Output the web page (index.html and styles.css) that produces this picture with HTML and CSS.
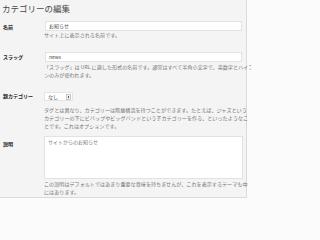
FILE: index.html
```html
<!DOCTYPE html>
<html lang="ja">
<head>
<meta charset="utf-8">
<title>カテゴリーの編集</title>
<link rel="stylesheet" href="styles.css">
</head>
<body>
<div class="wrap">
  <h1 class="title">カテゴリーの編集</h1>
  <div class="form">
    <div class="row row-name">
      <div class="label">名前</div>
      <div class="field">
        <div class="input">お知らせ</div>
        <p class="desc">サイト上に表示される名前です。</p>
      </div>
    </div>
    <div class="row row-slug">
      <div class="label">スラッグ</div>
      <div class="field">
        <div class="input">news</div>
        <p class="desc">「スラッグ」は URL に適した形式の名前です。通常はすべて半角小文字で、英数字とハイフ<br>ンのみが使われます。</p>
      </div>
    </div>
    <div class="row row-parent">
      <div class="label">親カテゴリー</div>
      <div class="field">
        <div class="select"><span class="select-text">なし</span><span class="select-arrow"></span></div>
        <p class="desc desc-parent">タグとは異なり、カテゴリーは階層構造を持つことができます。たとえば、ジャズという<br>カテゴリーの下にビバップやビッグバンドという子カテゴリーを作る、といったようなこ<br>とです。これはオプションです。</p>
      </div>
    </div>
    <div class="row row-desc">
      <div class="label label-desc">説明</div>
      <div class="field">
        <div class="textarea">サイトからのお知らせ</div>
        <p class="desc">この説明はデフォルトではあまり重要な意味を持ちませんが、これを表示するテーマも中<br>にはあります。</p>
      </div>
    </div>
  </div>
</div>
</body>
</html>
```

FILE: styles.css
```css
html, body {
  margin: 0;
  padding: 0;
}
body {
  width: 251px;
  height: 201px;
  overflow: hidden;
  background: #fbfbfb;
  font-family: "Noto Sans CJK JP", "Noto Sans", sans-serif;
  color: #333;
}
.wrap {
  width: 247px;
  height: 198px;
  box-sizing: border-box;
  background: #f4f4f4;
  border-right: 1px solid #dadada;
  border-bottom: 1px solid #dadada;
}
.title {
  margin: 0;
  padding: 2px 0 0 2px;
  font-size: 8.5px;
  line-height: 12px;
  font-weight: normal;
  color: #4a4a4a;
}
.row {
  display: flex;
}
.label {
  width: 41px;
  padding-left: 3px;
  flex: none;
  font-size: 5px;
  font-weight: bold;
  color: #222;
  line-height: 10px;
  white-space: nowrap;
}
.field {
  flex: 1;
  min-width: 0;
}
.row-name { margin-top: 7px; }
.row-name .label { padding-top: 1px; }
.row-slug { margin-top: 13px; }
.row-parent { margin-top: 13px; }
.row-parent .label { line-height: 7px; padding-top: 0; }
.row-desc { margin-top: 6px; }
.label-desc { padding-top: 4px; line-height: 8px; }
.input {
  margin-left: 1px;
  width: 197px;
  height: 10px;
  box-sizing: border-box;
  background: #fff;
  border: 1px solid #e2e2e2;
  padding-left: 3px;
  font-size: 5px;
  line-height: 8px;
  color: #444;
}
.desc {
  margin: 0;
  font-size: 5.1px;
  line-height: 8px;
  color: #777;
  white-space: nowrap;
}
.row-slug .desc { margin-top: 1px; }
.select {
  width: 29px;
  height: 9px;
  box-sizing: border-box;
  background: #fff;
  border: 1px solid #e4e4e4;
  display: flex;
  align-items: center;
  justify-content: space-between;
  padding: 0 1px 0 3px;
}
.select-text {
  font-size: 5px;
  line-height: 7px;
  color: #444;
}
.select-arrow {
  width: 5px;
  height: 6px;
  box-sizing: border-box;
  border: 1px solid #c8c8c8;
  background: #f2f2f2;
  position: relative;
}
.select-arrow::after {
  content: "";
  position: absolute;
  left: 1px;
  top: 1px;
  width: 1px;
  height: 2px;
  background: #555;
}
.desc-parent { margin-top: 5px; }
.textarea {
  width: 199px;
  height: 43px;
  box-sizing: border-box;
  background: #fff;
  border: 1px solid #e2e2e2;
  padding: 1px 0 0 3px;
  font-size: 5px;
  line-height: 8px;
  color: #777;
}
.row-desc .desc { margin-top: 1px; }
```
